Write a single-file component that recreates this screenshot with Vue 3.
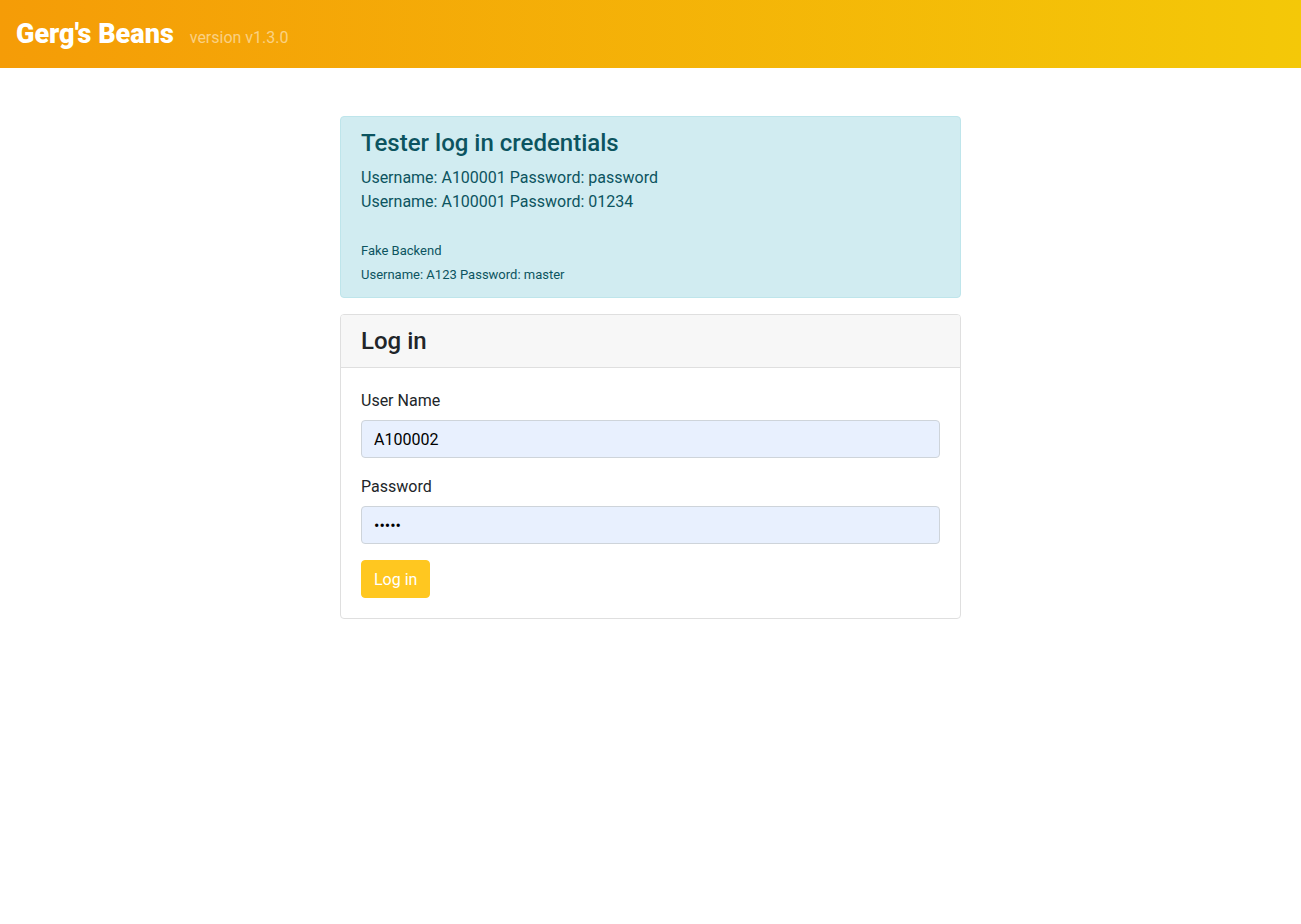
<script setup>
import { ref } from 'vue'

const username = ref('A100002')
const password = ref('01234')
</script>

<template>
  <header class="navbar">
    <a class="brand" href="#">Gerg's Beans</a>
    <span class="version">version v1.3.0</span>
  </header>
  <main class="container">
    <section class="alert">
      <h2 class="heading">Tester log in credentials</h2>
      <p>Username: A100001 Password: password<br>Username: A100001 Password: 01234</p>
      <p class="backend">Fake Backend<br>Username: A123 Password: master</p>
    </section>
    <section class="card">
      <h2 class="card-header">Log in</h2>
      <form class="card-body" @submit.prevent>
        <div class="field">
          <label for="username">User Name</label>
          <input id="username" v-model="username" type="text">
        </div>
        <div class="field">
          <label for="password">Password</label>
          <input id="password" v-model="password" type="password">
        </div>
        <button type="submit">Log in</button>
      </form>
    </section>
  </main>
</template>

<style>
body {
  margin: 0;
  background: #fff;
  color: #212529;
  font: 400 16px/24px Roboto, "Liberation Sans", sans-serif;
}
</style>

<style scoped>
* {
  box-sizing: border-box;
}

.navbar {
  display: flex;
  align-items: center;
  gap: 16px;
  height: 68px;
  padding: 0 16px;
  background: linear-gradient(to right, #f59c07, #f4c808);
}

.brand {
  color: #fff;
  font: 900 27px/42px Roboto, sans-serif;
  text-decoration: none;
}

.version {
  padding-top: 8px;
  color: rgba(255, 255, 255, 0.5);
}

.container {
  width: 100%;
  max-width: 651px;
  margin: 48px auto 0;
  padding: 0 15px;
}

.alert {
  margin-bottom: 16px;
  padding: 12px 20px 10px;
  border: 1px solid #bee5eb;
  border-radius: 4px;
  background: #d1ecf1;
  color: #0c5460;
}

h2 {
  margin: 0;
  font-size: 24px;
  font-weight: 500;
  line-height: 28px;
}

.heading {
  margin-bottom: 9px;
}

p {
  margin: 0;
}

.backend {
  margin-top: 25px;
  font-size: 13px;
}

.card {
  border: 1px solid #dfdfdf;
  border-radius: 4px;
}

.card-header {
  padding: 12px 20px;
  border-bottom: 1px solid #dfdfdf;
  border-radius: 3px 3px 0 0;
  background: #f7f7f7;
}

.card-body {
  padding: 20px;
}

.field {
  margin-bottom: 16px;
}

label {
  display: block;
  padding-top: 1px;
  margin-bottom: 7px;
}

input {
  display: block;
  width: 100%;
  height: 38px;
  padding: 6px 12px;
  border: 1px solid #ced4da;
  border-radius: 4px;
  background: #e8f0fe;
  color: #000;
  font: inherit;
}

button {
  display: block;
  padding: 7px 12px 5px;
  border: 1px solid #ffc720;
  border-radius: 4px;
  background: #ffc720;
  color: #fff;
  font: inherit;
}
</style>
